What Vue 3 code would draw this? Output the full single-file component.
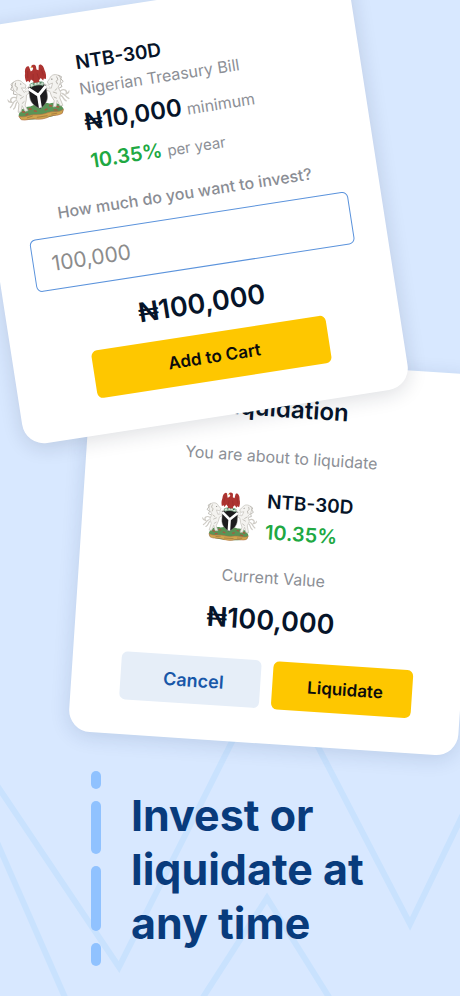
<script setup>
import { ref } from 'vue'

const amount = ref('100,000')
const dashes = ['short', 'medium', 'long', 'small']
</script>

<template>
  <main class="page">
    <svg width="0" height="0" class="defs" aria-hidden="true">
      <defs>
        <g id="horse">
          <path d="M9 31C5 29 2 32 4 35C2 35 1 34 0 32M8 34C5 35 5 38 2 40M9 36C7 38 8 40 5 42" fill="none" stroke="#cfccc6" stroke-width="1.4" stroke-linecap="round" />
          <path d="M8 16C11 13 16 13 18 17L21 20L20 23L16 22L18 27L25 24L27 26L20 30L19 35L17 40L19 46H16L14 40L12 46H9L11 38L9 33L11 27L8 23L7 19Z" fill="#f4f3f0" stroke="#c4c1ba" stroke-width="0.8" stroke-linejoin="round" />
          <path d="M9 15L6 17L7 19L5 22L8 24L7 27L10 28M11 16L10 19L12 21L11 24" fill="none" stroke="#aaa79f" stroke-width="0.8" />
          <path d="M13 33L17 31M14 38L17 36M12 28L15 30" fill="none" stroke="#b3b0a8" stroke-width="0.8" />
          <path d="M19 25L27 19L30 21L29 23L20 27Z" fill="#f7f6f3" stroke="#c9c7c1" stroke-width="0.5" />
          <circle cx="16" cy="18" r="0.6" fill="#6a6863" />
        </g>
        <symbol id="arms" viewBox="0 0 64 57">
          <path d="M9 49C11 44 16 41 22 42C29 40 36 40 42 42C48 41 53 44 55 49L54 53C43 57 21 57 10 53Z" fill="#5a9456" />
          <path d="M13 46l3 1m4-3l3 1m18-1l3 1m4 1l3 1M16 50l3-1m26 0l4 1M25 47l3 1m8 0l3-1" stroke="#a8593f" stroke-width="1.5" />
          <path d="M9 50C15 53 19 50 25 51C30 52 34 52 39 51C45 50 49 53 55 50L53 54C48 56 45 54 40 55C35 57 29 57 24 55C19 54 16 56 11 54Z" fill="#cfa54e" stroke="#b5704a" stroke-width="0.6" />
          <path d="M17 53L23 52M27 54H38M42 53L48 53" stroke="#9a6f3d" stroke-width="0.7" />
          <use href="#horse" />
          <use href="#horse" transform="translate(64 0) scale(-1 1)" />
          <path d="M23 23C27 21 37 21 41 23V33C41 39 37 43 32 46C27 43 23 39 23 33Z" fill="#1d1c1e" stroke="#8c8984" stroke-width="0.5" />
          <path d="M23 24L32 32L41 24M32 31V45" fill="none" stroke="#fff" stroke-width="3" />
          <path d="M25 20C28 18 36 18 39 20L38 23C35 21 29 21 26 23Z" fill="#dfeadf" stroke="#6b9a79" stroke-width="0.8" />
          <path d="M28 20h2m2-0.5h1m2 0.5h2" stroke="#357349" stroke-width="1.4" />
          <path d="M29 2C30 0 34 0 34 3L34 6L36 7L37 2C39 0 42 3 42 8C43 11 43 14 42 17L40 16L39 18L37 15L35 17V19H29V17L27 15L25 18L24 16L22 17C21 14 21 11 22 8C22 3 25 0 27 2L28 7L30 6L31 4Z" fill="#ad3431" />
          <path d="M25 6L24 13M39 6L40 13M30 10L29 16M34 10L35 16" fill="none" stroke="#97292b" stroke-width="0.6" />
          <path d="M30 2L28 3L30 4Z" fill="#e4ad48" />
        </symbol>
      </defs>
    </svg>

    <svg class="backdrop" viewBox="0 0 460 996" preserveAspectRatio="xMidYMax slice" aria-hidden="true">
      <g fill="none" stroke="#c9e2fe" stroke-width="6">
        <path d="M-4 784L119 967L273 660L410 924L464 812" />
        <path d="M-4 840L67 1002" />
        <path d="M200 1002L267 898L332 1002" />
      </g>
    </svg>

    <section class="card invest">
      <header class="bill">
        <svg class="arms" aria-hidden="true"><use href="#arms" /></svg>
        <div>
          <h2 class="code">NTB-30D</h2>
          <p class="note">Nigerian Treasury Bill</p>
          <p class="price"><strong>₦10,000</strong><span>minimum</span></p>
          <p class="rate-row"><strong class="rate">10.35%</strong><span>per year</span></p>
        </div>
      </header>
      <label class="question" for="amount">How much do you want to invest?</label>
      <input id="amount" v-model="amount" class="amount" type="text" inputmode="numeric" />
      <p class="total">₦{{ amount }}</p>
      <button class="btn primary add" type="button">Add to Cart</button>
    </section>

    <section class="card liquidation">
      <h2 class="title">Liquidation</h2>
      <p class="note">You are about to liquidate</p>
      <div class="holding">
        <svg class="arms" aria-hidden="true"><use href="#arms" /></svg>
        <div>
          <h3 class="code">NTB-30D</h3>
          <p class="rate">10.35%</p>
        </div>
      </div>
      <p class="note">Current Value</p>
      <p class="total">₦100,000</p>
      <div class="actions">
        <button class="btn secondary" type="button">Cancel</button>
        <button class="btn primary" type="button">Liquidate</button>
      </div>
    </section>

    <section class="promo">
      <div class="dashes" aria-hidden="true">
        <span v-for="d in dashes" :key="d" :class="d"></span>
      </div>
      <h1>Invest or<br />liquidate at<br />any time</h1>
    </section>
  </main>
</template>

<style>
body {
  margin: 0;
  background: #d8e8ff;
}
</style>

<style scoped>
.page {
  position: relative;
  box-sizing: border-box;
  min-height: 100vh;
  display: flex;
  flex-direction: column;
  overflow: hidden;
  padding-bottom: 28px;
  background: #d8e8ff;
  color: #061429;
  font-family: Inter, "Liberation Sans", sans-serif;
}
h1, h2, h3, p { margin: 0; }
.defs { position: absolute; }
.backdrop {
  position: absolute;
  inset: 0;
  width: 100%;
  height: 100%;
}
.card {
  position: relative;
  box-sizing: border-box;
  width: calc(100% - 70px);
  display: flex;
  flex-direction: column;
  background: #fff;
  border-radius: 22px;
  box-shadow: 0 4px 20px rgba(20, 50, 100, 0.14);
}
.invest {
  z-index: 2;
  margin: -2px 0 0 -9px;
  padding: 37px 33px 36px 35px;
  transform: rotate(-8.8deg);
  box-shadow: 0 4px 20px rgba(20, 30, 50, 0.14);
}
.liquidation {
  z-index: 1;
  align-self: flex-end;
  margin: -57px -10px 0 0;
  padding: 31px 49px 35px;
  transform: rotate(3.8deg);
  text-align: center;
}
.bill {
  display: flex;
  gap: 10px;
}
.bill .arms {
  flex: none;
  width: 63px;
  height: 57px;
  margin-top: 7px;
}
.code {
  font-size: 19px;
  line-height: 26px;
  font-weight: 600;
}
.note {
  font-size: 16px;
  line-height: 26px;
  color: #8c8f96;
}
.price, .rate-row {
  display: flex;
  align-items: baseline;
  gap: 5px;
  line-height: 36px;
}
.price { line-height: 42px; }
.price span, .rate-row span {
  font-size: 16px;
  line-height: 20px;
  color: #8c8f96;
}
.rate-row span { font-size: 15px; }
.price strong {
  font-size: 24px;
  font-weight: 600;
}
.rate {
  font-size: 20px;
  font-weight: 600;
  color: #20a842;
}
.question {
  margin-top: 15px;
  font-size: 16px;
  line-height: 26px;
  font-weight: 500;
  text-align: center;
  color: #8a8d94;
}
.amount {
  box-sizing: border-box;
  width: 100%;
  height: 53px;
  margin-top: 10px;
  padding: 0 18px;
  border: 1px solid #5b93dc;
  border-radius: 6px;
  outline: none;
  background: #fff;
  font: 400 21px Inter, "Liberation Sans", sans-serif;
  color: #8c8c8c;
}
.total {
  font-size: 27px;
  line-height: 40px;
  font-weight: 600;
  text-align: center;
}
.invest .total { margin-top: 16px; }
.btn {
  height: 48px;
  padding: 0 0 0 6px;
  border: 0;
  border-radius: 6px;
  font: 600 17px Inter, "Liberation Sans", sans-serif;
}
.primary {
  background: #fec700;
  color: #0c0c0c;
}
.secondary {
  background: #e6eef8;
  color: #1857a8;
  font-size: 18px;
}
.add { margin: 10px 41px 0 44px; }
.title {
  font-size: 24px;
  line-height: 32px;
  font-weight: 600;
}
.title + .note { margin-top: 19px; }
.holding {
  display: flex;
  align-items: center;
  justify-content: center;
  gap: 9px;
  margin: 19px 0 16px;
  text-align: left;
}
.holding .arms {
  width: 55px;
  height: 49px;
}
.holding .code { line-height: 28px; }
.holding .rate { line-height: 32px; }
.liquidation .total { margin-top: 10px; }
.actions {
  display: grid;
  grid-template-columns: 1fr 1fr;
  gap: 12px;
  margin-top: 20px;
}
.promo {
  position: relative;
  display: flex;
  align-items: center;
  gap: 30px;
  margin-top: 27px;
  padding-left: 91px;
}
.dashes {
  display: grid;
  gap: 12px;
}
.dashes span {
  width: 10px;
  border-radius: 5px;
  background: #90c2ff;
}
.dashes .short { height: 18px; }
.dashes .medium { height: 53px; }
.dashes .long { height: 65px; }
.dashes .small { height: 23px; }
h1 {
  font-size: 43px;
  line-height: 54px;
  font-weight: 700;
  color: #083b7c;
}
</style>
